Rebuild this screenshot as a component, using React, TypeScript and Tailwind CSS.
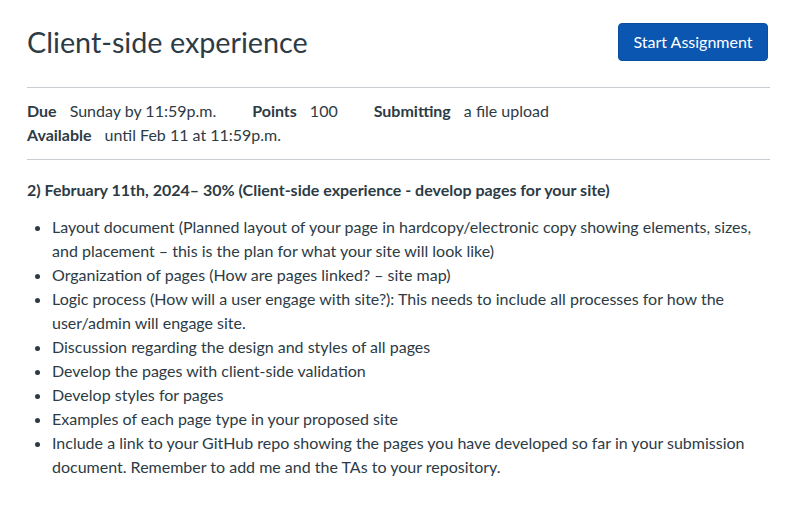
import React from 'react';

const items: string[] = [
  'Layout document (Planned layout of your page in hardcopy/electronic copy showing elements, sizes, and placement – this is the plan for what your site will look like)',
  'Organization of pages (How are pages linked? – site map)',
  'Logic process (How will a user engage with site?): This needs to include all processes for how the user/admin will engage site.',
  'Discussion regarding the design and styles of all pages',
  'Develop the pages with client-side validation',
  'Develop styles for pages',
  'Examples of each page type in your proposed site',
  'Include a link to your GitHub repo showing the pages you have developed so far in your submission document. Remember to add me and the TAs to your repository.',
];

const Meta: React.FC<{ label: string; value: string; last?: boolean }> = ({ label, value, last }) => (
  <span className={last ? '' : 'mr-[36px]'}>
    <span className="font-bold">{label}</span>
    <span className="ml-[13px]">{value}</span>
  </span>
);

const App: React.FC = () => {
  return (
    <div
      className="min-h-screen bg-white text-[#2d3b45] pl-[27px] pr-[19px] pt-[23px]"
      style={{ fontFamily: 'Lato, "Noto Sans", "Liberation Sans", sans-serif' }}
    >
      {/* header */}
      <div className="flex items-center justify-between">
        <h1 className="text-[28.75px] font-normal leading-[38px]">Client-side experience</h1>
        <button
          type="button"
          className="h-[38px] w-[150px] mr-[2px] rounded-[4px] border border-[#0a4e9f] bg-[#0b56b0] text-white text-[16px] leading-none"
        >
          Start Assignment
        </button>
      </div>

      {/* details */}
      <div className="mt-[26px] border-t border-b border-[#c7cdd1] pt-[11px] pb-[12px] text-[16px] leading-[24px]">
        <div>
          <Meta label="Due" value="Sunday by 11:59p.m." />
          <Meta label="Points" value="100" />
          <Meta label="Submitting" value="a file upload" last />
        </div>
        <div>
          <Meta label="Available" value="until Feb 11 at 11:59p.m." last />
        </div>
      </div>

      {/* description */}
      <div className="pt-[18px] text-[16px] leading-[24px]">
        <p className="font-bold">
          2) February 11th, 2024– 30% (Client-side experience - develop pages for your site)
        </p>
        <ul className="mt-[13px] list-disc pl-[25px]">
          {items.map((t) => (
            <li key={t}>{t}</li>
          ))}
        </ul>
      </div>
    </div>
  );
};

export default App;
